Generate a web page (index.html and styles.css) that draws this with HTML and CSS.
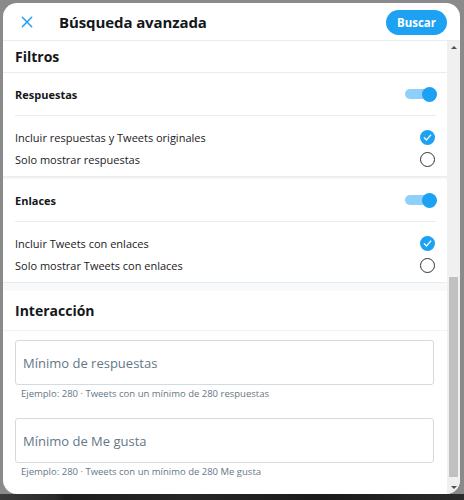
FILE: index.html
```html
<!DOCTYPE html>
<html lang="es">
<head>
<meta charset="utf-8">
<title>Búsqueda avanzada</title>
<link rel="stylesheet" href="styles.css">
</head>
<body>
<div class="page">
  <div class="modal">
    <header class="header">
      <button class="close" aria-label="Cerrar">
        <svg viewBox="0 0 24 24" width="14" height="14"><path d="M4 4 L20 20 M20 4 L4 20" stroke="#1da1f2" stroke-width="2.6" stroke-linecap="round" fill="none"/></svg>
      </button>
      <h1 class="title">Búsqueda avanzada</h1>
      <button class="search-btn">Buscar</button>
    </header>
    <div class="body">
      <div class="content">
        <h2 class="section-title">Filtros</h2>

        <div class="group">
          <div class="toggle-row">
            <span class="toggle-label">Respuestas</span>
            <span class="toggle"><span class="knob"></span></span>
          </div>
          <div class="options">
            <div class="option"><span>Incluir respuestas y Tweets originales</span><span class="radio checked"><svg viewBox="0 0 16 16" width="15" height="15"><circle cx="8" cy="8" r="8" fill="#1da1f2"/><path d="M4.6 8.2 L7 10.6 L11.4 5.4" stroke="#fff" stroke-width="1.4" fill="none" stroke-linecap="round" stroke-linejoin="round"/></svg></span></div>
            <div class="option"><span>Solo mostrar respuestas</span><span class="radio"></span></div>
          </div>
        </div>
        <div class="sep-thin"></div>

        <div class="group">
          <div class="toggle-row">
            <span class="toggle-label">Enlaces</span>
            <span class="toggle"><span class="knob"></span></span>
          </div>
          <div class="options">
            <div class="option"><span>Incluir Tweets con enlaces</span><span class="radio checked"><svg viewBox="0 0 16 16" width="15" height="15"><circle cx="8" cy="8" r="8" fill="#1da1f2"/><path d="M4.6 8.2 L7 10.6 L11.4 5.4" stroke="#fff" stroke-width="1.4" fill="none" stroke-linecap="round" stroke-linejoin="round"/></svg></span></div>
            <div class="option"><span>Solo mostrar Tweets con enlaces</span><span class="radio"></span></div>
          </div>
        </div>
        <div class="sep-thick"></div>

        <h2 class="section-title interaction">Interacción</h2>
        <div class="field">
          <div class="input">Mínimo de respuestas</div>
          <div class="helper">Ejemplo: 280 · Tweets con un mínimo de 280 respuestas</div>
        </div>
        <div class="field second">
          <div class="input">Mínimo de Me gusta</div>
          <div class="helper">Ejemplo: 280 · Tweets con un mínimo de 280 Me gusta</div>
        </div>
      </div>
      <div class="scrollbar">
        <span class="arrow up"></span>
        <span class="track"><span class="thumb"></span></span>
        <span class="arrow down"></span>
      </div>
    </div>
  </div>
  <div class="backdrop-bottom"></div>
</div>
</body>
</html>
```

FILE: styles.css
```css
* { box-sizing: border-box; }
html, body { margin: 0; padding: 0; }
body {
  font-family: "Open Sans", "Noto Sans", sans-serif;
  color: #14171a;
  background: #8a8a8a;
}
.page {
  width: 464px;
  height: 500px;
  display: flex;
  flex-direction: column;
  padding: 3px 4px 0 3px;
  background: #8a8a8a;
  overflow: hidden;
}
.modal {
  height: 491px;
  background: #fff;
  border-radius: 14px;
  overflow: hidden;
  display: flex;
  flex-direction: column;
  flex-shrink: 0;
}
.backdrop-bottom {
  flex: 1;
  margin: 0 -4px 0 -3px;
  background: linear-gradient(90deg, #3a3a3a 0, #2a2a2a 12%, #1d1d1d 14%, #262626 40%, #1a1a1a 70%, #2c2c2c 100%);
}
.header {
  height: 38px;
  flex-shrink: 0;
  border-bottom: 1px solid #e6ecf0;
  display: flex;
  align-items: center;
  padding: 0 13px 0 15px;
}
.close {
  width: 16px;
  height: 16px;
  padding: 0;
  border: 0;
  background: none;
  display: flex;
  align-items: center;
  justify-content: center;
  margin-left: 1px;
}
.title {
  margin: 0 0 0 24px;
  font-size: 15px;
  font-weight: 700;
  flex: 1;
  letter-spacing: -0.1px;
}
.search-btn {
  width: 61px;
  height: 25px;
  border: 0;
  border-radius: 13px;
  background: #1da1f2;
  color: #fff;
  font-family: inherit;
  font-weight: 700;
  font-size: 11.5px;
  padding: 0;
  margin-top: 1px;
}
.body {
  flex: 1;
  display: flex;
  min-height: 0;
}
.content {
  flex: 1;
  min-width: 0;
  overflow: hidden;
}
.section-title {
  margin: 0;
  height: 32px;
  display: flex;
  align-items: center;
  padding-left: 12px;
  font-size: 14px;
  font-weight: 700;
  border-bottom: 1px solid #e6ecf0;
}
.section-title.interaction {
  height: 40px;
  border-bottom-color: #f0f3f5;
}
.toggle-row {
  height: 43px;
  margin: 0 11px 0 12px;
  border-bottom: 1px solid #e6ecf0;
  display: flex;
  align-items: center;
  justify-content: space-between;
}
.toggle-label {
  font-size: 11px;
  font-weight: 700;
}
.toggle {
  position: relative;
  width: 30px;
  height: 10px;
  border-radius: 5px;
  background: #8ed0f9;
  margin-right: 1px;
}
.knob {
  position: absolute;
  right: -2px;
  top: -2.5px;
  width: 15px;
  height: 15px;
  border-radius: 50%;
  background: #1da1f2;
}
.options {
  padding: 10px 12px 6px 12px;
}
.option {
  height: 22px;
  display: flex;
  align-items: center;
  justify-content: space-between;
  font-size: 11px;
  color: #1c2024;
}
.radio {
  width: 15px;
  height: 15px;
  border-radius: 50%;
  border: 1.5px solid #2f3336;
  display: block;
}
.radio.checked {
  border: 0;
}
.radio svg { display: block; }
.sep-thin {
  height: 3px;
  border-top: 1px solid #e6ecf0;
  background: #f2f4f5;
}
.sep-thick {
  height: 9px;
  border-top: 1px solid #e6ecf0;
  background: #f7f9fa;
}
.field {
  padding: 9px 13px 0 12px;
}
.field.second {
  padding-top: 16px;
}
.input {
  height: 45px;
  border: 1px solid #d4dbe0;
  border-radius: 3px;
  display: flex;
  align-items: center;
  padding-left: 7px;
  font-size: 13px;
  color: #657786;
}
.helper {
  height: 17px;
  line-height: 16px;
  padding-top: 1px;
  padding-left: 6px;
  font-size: 9.5px;
  color: #657786;
}
.scrollbar {
  width: 13px;
  flex-shrink: 0;
  background: #f0f0f0;
  display: flex;
  flex-direction: column;
  align-items: center;
}
.arrow {
  height: 13px;
  width: 13px;
  display: flex;
  align-items: center;
  justify-content: center;
  flex-shrink: 0;
}
.arrow::before {
  content: "";
  border-left: 3px solid transparent;
  border-right: 3px solid transparent;
}
.arrow.up::before { border-bottom: 3px solid #505050; }
.arrow.down::before { border-top: 3px solid #505050; }
.track {
  flex: 1;
  width: 100%;
  display: flex;
  flex-direction: column;
  justify-content: flex-end;
  padding: 0 2px 4px;
}
.thumb {
  height: 200px;
  background: #c1c1c1;
  display: block;
}
```
